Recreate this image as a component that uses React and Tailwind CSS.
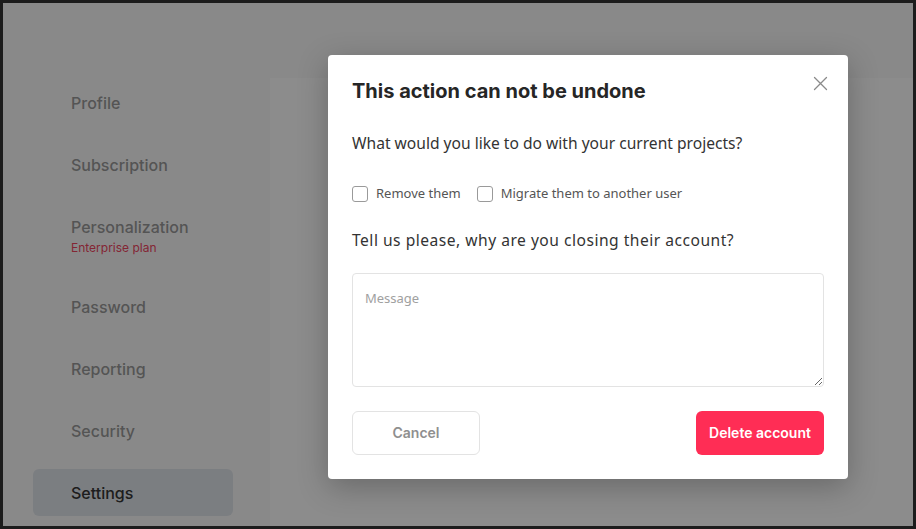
import React, { useState } from 'react';

const menu = [
    { label: 'Profile' },
    { label: 'Subscription' },
    { label: 'Personalization', note: 'Enterprise plan' },
    { label: 'Password' },
    { label: 'Reporting' },
    { label: 'Security' },
    { label: 'Settings', active: true },
];

const Checkbox = ({ label, checked, onChange }) => (
    <label className="flex items-center gap-2 cursor-pointer">
        <input
            type="checkbox"
            checked={checked}
            onChange={onChange}
            className="appearance-none w-4 h-4 rounded-[3px] border border-[#9a9a9a] bg-white checked:bg-[#ff2d55] checked:border-[#ff2d55]"
        />
        <span className="text-[13px] text-[#555]">{label}</span>
    </label>
);

const App = () => {
    const [remove, setRemove] = useState(false);
    const [migrate, setMigrate] = useState(false);
    const [message, setMessage] = useState('');

    return (
        <div className="relative w-full h-screen overflow-hidden border-[3px] border-[#1c1c1c] bg-[#fafafa] font-['Inter',sans-serif]">
            {/* settings page behind the dialog */}
            <div className="flex h-full pt-[75px] pl-[30px] gap-[37px]">
                <nav className="w-[200px] flex flex-col gap-[15px] pt-[1px]">
                    {menu.map(item => (
                        <div
                            key={item.label}
                            className={`pl-[38px] py-[13.5px] rounded-md ${item.active ? 'bg-[#e0e5eb] text-[#363636]' : 'text-[#9a9a9a]'}`}
                        >
                            <div className="text-base leading-5 font-medium">{item.label}</div>
                            {item.note && <div className="text-xs leading-[18px] text-[#f0455f] pt-[2px] -mb-[2px]">{item.note}</div>}
                        </div>
                    ))}
                </nav>
                <div className="flex-1 bg-white" />
            </div>

            {/* overlay */}
            <div className="absolute inset-0 bg-black/45" />

            {/* dialog */}
            <div className="absolute left-[325px] top-[52px] w-[520px] bg-white rounded shadow-[0_8px_30px_rgba(0,0,0,0.25)] px-6 pt-[22px] pb-6">
                <div className="flex items-start justify-between">
                    <h2 className="text-xl leading-7 font-bold text-[#262626]">This action can not be undone</h2>
                    <button className="mt-[-3px] mr-[-6px] p-0.5 text-[#8a8a8a]">
                        <svg width="15" height="15" viewBox="0 0 15 15" fill="none" stroke="currentColor" strokeWidth="1.3" strokeLinecap="round">
                            <path d="M1.5 1.5l12 12M13.5 1.5l-12 12" />
                        </svg>
                    </button>
                </div>

                <div className="font-['Noto_Sans',sans-serif]">
                    <p className="mt-[28px] text-[15.6px] leading-5 text-[#333]">What would you like to do with your current projects?</p>

                    <div className="mt-[31px] flex items-center gap-4">
                        <Checkbox label="Remove them" checked={remove} onChange={() => setRemove(!remove)} />
                        <Checkbox label="Migrate them to another user" checked={migrate} onChange={() => setMigrate(!migrate)} />
                    </div>

                    <p className="mt-[26px] text-[15.6px] leading-5 tracking-[0.5px] text-[#333]">Tell us please, why are you closing their account?</p>

                    <textarea
                        value={message}
                        onChange={e => setMessage(e.target.value)}
                        placeholder="Message"
                        className="mt-[23px] block w-full h-[114px] rounded border border-[#e3e3e3] px-3 py-[14px] text-[13px] leading-5 text-[#333] placeholder:text-[#a0a0a0] outline-none"
                    />
                </div>

                <div className="mt-6 flex justify-between">
                    <button className="w-32 h-11 rounded-md border border-[#e3e3e3] bg-white text-sm font-semibold text-[#8f8f8f]">
                        Cancel
                    </button>
                    <button className="w-32 h-11 rounded-md bg-[#ff2d55] text-sm font-semibold text-white">
                        Delete account
                    </button>
                </div>
            </div>
        </div>
    );
};

export default App;
